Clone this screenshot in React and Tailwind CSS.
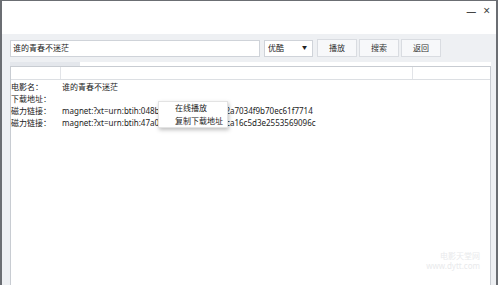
import React from 'react'

const rows = [
    { label: '电影名：', value: '谁的青春不迷茫' },
    { label: '下载地址：', value: '' },
    { label: '磁力链接：', value: 'magnet:?xt=urn:btih:048b7e5c9d13f6b2c8e2a7034f9b70ec61f7714' },
    { label: '磁力链接：', value: 'magnet:?xt=urn:btih:47a08d2b6f194c3e7b0ca16c5d3e2553569096c' },
]

function Btn({ children }) {
    return (
        <div className="h-[18px] w-[40px] flex items-center justify-center bg-[#f7f8fa] border border-[#d9dce1] text-[8px] text-[#333]">
            {children}
        </div>
    )
}

export default function App() {
    return (
        <div
            className="w-[498px] h-[285px] flex flex-col bg-white border-l-2 border-r-2 border-t border-[#6b6e73] overflow-hidden"
            style={{ fontFamily: '"Noto Sans", "Noto Sans CJK SC", sans-serif' }}
        >
            <div className="h-[33px] flex justify-end items-start gap-[7px] pr-[6px] pt-[3px] text-[#444]">
                <span className="text-[10px] leading-[14px]">—</span>
                <span className="text-[12px] leading-[14px]">×</span>
            </div>

            <div className="flex-1 flex flex-col bg-[#eef0f3] pl-[8px] pr-[5px]">
                <div className="flex items-center gap-[4px] pt-[4px] h-[24px]">
                    <div className="w-[250px] h-[17px] bg-white border border-[#cfd3d9] flex items-center pl-[2px] text-[8px] text-[#222]">
                        谁的青春不迷茫
                    </div>
                    <div className="w-[49px] h-[17px] bg-white border border-[#cfd3d9] flex items-center justify-between pl-[3px] pr-[5px] text-[8px] text-[#222]">
                        <span>优酷</span>
                        <span className="text-[5px]">▼</span>
                    </div>
                    <div className="flex gap-[2px]">
                        <Btn>播放</Btn>
                        <Btn>搜索</Btn>
                        <Btn>返回</Btn>
                    </div>
                </div>

                <div className="mt-[4px] flex-1 flex flex-col bg-white relative">
                    <div className="h-[4px] w-[70px] bg-[#e4e7ec]" />
                    <div className="flex-1 border border-[#c8ccd2] border-b-0 flex flex-col">
                        <div className="h-[13px] border-b border-[#dcdfe3] flex">
                            <div className="w-[50px] border-r border-[#e2e4e8]" />
                            <div className="w-[352px] border-r border-[#e2e4e8]" />
                        </div>
                        <div className="pt-[1px] flex flex-col text-[8px] text-[#222]">
                            {rows.map((r, i) => (
                                <div key={i} className="flex h-[12px] items-center whitespace-nowrap">
                                    <span className="w-[51px]">{r.label}</span>
                                    <span>{r.value}</span>
                                </div>
                            ))}
                        </div>
                        <div className="flex-1 flex items-end justify-end pr-[10px] pb-[14px]">
                            <div className="text-[8px] leading-[10px] text-[#e9eaec] text-right">
                                <div>电影天堂网</div>
                                <div>www.dytt.com</div>
                            </div>
                        </div>
                    </div>

                    <div className="absolute left-[148px] top-[39px] w-[70px] h-[27px] bg-white border border-[#e3e3e3] shadow-[1px_2px_4px_rgba(0,0,0,0.25)] flex flex-col justify-center gap-[3px] pl-[16px] text-[8px] text-[#222]">
                        <span className="leading-[10px]">在线播放</span>
                        <span className="leading-[10px]">复制下载地址</span>
                    </div>
                </div>
            </div>
        </div>
    )
}
